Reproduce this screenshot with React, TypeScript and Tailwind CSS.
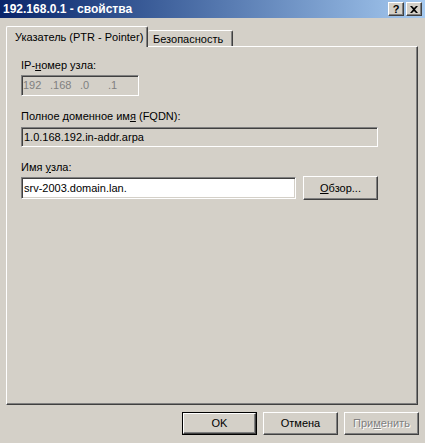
import React from "react";

const raised =
  "border border-t-white border-l-white border-b-[#404040] border-r-[#404040] shadow-[inset_-1px_-1px_#808080,inset_1px_1px_#d4d0c8]";
const sunken =
  "border border-t-[#808080] border-l-[#808080] border-b-white border-r-white shadow-[inset_1px_1px_#404040,inset_-1px_-1px_#d4d0c8]";

function CaptionButton({ children }: { children: React.ReactNode }) {
  return (
    <div className={`w-[16px] h-[14px] bg-[#d4d0c8] ${raised} flex items-center justify-center`}>
      {children}
    </div>
  );
}

export default function App() {
  return (
    <div
      className="w-[425px] h-[443px] bg-[#d4d0c8] text-[11px] leading-[13px] text-black overflow-hidden flex flex-col"
      style={{ fontFamily: '"Liberation Sans", Arial, sans-serif' }}
    >
      {/* Title bar */}
      <div className="h-[18px] flex items-center bg-gradient-to-r from-[#0a246a] to-[#a6caf0] pl-[3px] pr-[3px]">
        <span className="text-white font-bold text-[12px] leading-[14px] flex-1">192.168.0.1 - свойства</span>
        <div className="flex gap-[2px]">
          <CaptionButton>
            <span className="font-bold text-[11px] leading-[11px] text-black">?</span>
          </CaptionButton>
          <CaptionButton>
            <svg width="8" height="7" viewBox="0 0 8 7">
              <path d="M0 0h2l2 2 2-2h2L5 3.5 8 7H6L4 5 2 7H0l3-3.5z" fill="#000" />
            </svg>
          </CaptionButton>
        </div>
      </div>

      {/* Tabs */}
      <div className="pl-[6px] pt-[8px] flex items-end h-[28px] relative z-10">
        <div className="h-[21px] -mb-[1px] w-[142px] bg-[#d4d0c8] border-t border-l border-t-white border-l-white border-r border-r-[#404040] shadow-[inset_-1px_0_#808080] rounded-t-[2px] flex items-start pt-[4px] pl-[8px]">
          Указатель (PTR - Pointer)
        </div>
        <div className="h-[16px] w-[85px] bg-[#d4d0c8] border-t border-t-white border-r border-r-[#404040] shadow-[inset_-1px_0_#808080] rounded-t-[2px] flex items-start pt-[2px] pl-[5px]">
          Безопасность
        </div>
      </div>

      {/* Panel */}
      <div className="ml-[6px] w-[412px] h-[359px] border border-t-white border-l-white border-b-[#404040] border-r-[#404040] shadow-[inset_-1px_-1px_#808080] pl-[14px] pt-[12px] flex flex-col">
        <div>
          IP-<u>н</u>омер узла:
        </div>
        <div className={`mt-[3px] w-[118px] h-[21px] ${sunken} bg-[#d4d0c8] text-[#808080] flex items-center pl-[1px]`}>
          <span className="w-[27px]">192</span>
          <span className="w-[30px]">.168</span>
          <span className="w-[28px]">.0</span>
          <span>.1</span>
        </div>

        <div className="mt-[14px]">
          Полное доменное им<u>я</u> (FQDN):
        </div>
        <div className={`mt-[4px] w-[357px] h-[20px] ${sunken} bg-[#d4d0c8] flex items-center pl-[2px]`}>
          1.0.168.192.in-addr.arpa
        </div>

        <div className="mt-[14px]">
          Имя <u>у</u>зла:
        </div>
        <div className="mt-[2px] flex items-center gap-[7px]">
          <div className={`w-[275px] h-[22px] ${sunken} bg-white flex items-center pl-[2px]`}>
            srv-2003.domain.lan.
          </div>
          <div className={`w-[75px] h-[24px] ${raised} bg-[#d4d0c8] flex items-center justify-center`}>
            <span>
              <u>О</u>бзор...
            </span>
          </div>
        </div>
      </div>

      {/* Buttons */}
      <div className="mt-[7px] flex justify-end gap-[6px] pr-[6px]">
        <div className="w-[75px] h-[23px] border border-black">
          <div className={`w-full h-full ${raised} bg-[#d4d0c8] flex items-center justify-center`}>OK</div>
        </div>
        <div className={`w-[75px] h-[23px] ${raised} bg-[#d4d0c8] flex items-center justify-center`}>
          Отмена
        </div>
        <div
          className={`w-[75px] h-[23px] ${raised} bg-[#d4d0c8] flex items-center justify-center text-[#808080] [text-shadow:1px_1px_#ffffff]`}
        >
          <span>
            При<u>м</u>енить
          </span>
        </div>
      </div>
    </div>
  );
}
